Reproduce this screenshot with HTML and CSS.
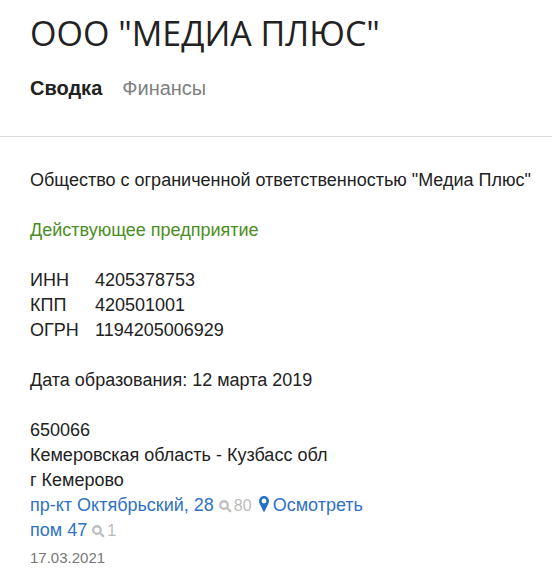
FILE: index.html
```html
<!DOCTYPE html>
<html lang="ru">
<head>
<meta charset="utf-8">
<title>ООО "МЕДИА ПЛЮС"</title>
<link rel="stylesheet" href="styles.css">
</head>
<body>
<header class="header">
  <h1 class="title">ООО "МЕДИА ПЛЮС"</h1>
  <nav class="tabs">
    <a class="tab tab-active" href="#summary" aria-current="page">Сводка</a>
    <a class="tab" href="#finance">Финансы</a>
  </nav>
</header>
<main class="summary" id="summary">
  <p>Общество с ограниченной ответственностью "Медиа Плюс"</p>
  <p class="status">Действующее предприятие</p>
  <dl class="codes">
    <dt>ИНН</dt><dd>4205378753</dd>
    <dt>КПП</dt><dd>420501001</dd>
    <dt>ОГРН</dt><dd>1194205006929</dd>
  </dl>
  <p>Дата образования: 12 марта 2019</p>
  <address class="address">
    <div>650066</div>
    <div>Кемеровская область - Кузбасс обл</div>
    <div>г Кемерово</div>
    <div class="line">
      <a href="#street">пр-кт Октябрьский, 28</a>
      <a class="count" href="#street-search"><svg class="lens" viewBox="0 0 13 13" aria-hidden="true"><circle cx="5" cy="5" r="3.800"/><path d="M8 8l3.200 3.200"/></svg>80</a>
      <a class="view" href="#map"><svg class="pin" viewBox="0 0 10 16" aria-hidden="true"><path fill-rule="evenodd" d="M5 0a5 5 0 0 0-5 5c0 1.500.600 2.800 1.300 4L4.300 15.200q.700 1 1.400 0L8.700 9c.700-1.200 1.300-2.500 1.300-4a5 5 0 0 0-5-5zm0 2.600a2.400 2.400 0 1 1 0 4.800a2.400 2.400 0 0 1 0-4.800z"/></svg>Осмотреть</a>
    </div>
    <div class="line">
      <a href="#room">пом 47</a>
      <a class="count" href="#room-search"><svg class="lens" viewBox="0 0 13 13" aria-hidden="true"><circle cx="5" cy="5" r="3.800"/><path d="M8 8l3.200 3.200"/></svg>1</a>
    </div>
    <time class="date" datetime="2021-03-17">17.03.2021</time>
  </address>
</main>
</body>
</html>
```
FILE: styles.css
```css
body {
  margin: 0;
  background: #fff;
  color: #222;
  font: 18px/25px "Liberation Sans", Arial, sans-serif;
}
a { color: #3072c4; text-decoration: none; }
.header {
  padding: 8px 20px 35px 30px;
  border-bottom: 1px solid #d9d9d9;
}
.title {
  margin: 0 0 18px;
  font: 400 34px/50px "Open Sans", "Noto Sans", sans-serif;
}
.tabs { display: flex; gap: 20px; font-size: 20px; }
.tab { color: #808080; }
.tab-active { color: #222; font-weight: 700; }
.summary { padding: 31px 20px 0 30px; }
.summary p { margin: 0 0 25px; }
.summary .status { color: #4a8f22; }
.codes {
  display: grid;
  grid-template-columns: 65px 1fr;
  margin: 0 0 25px;
}
.codes dd { margin: 0; }
.address { font-style: normal; }
.line { display: flex; align-items: center; gap: 5px; }
.count {
  display: flex;
  align-items: center;
  gap: 2px;
  color: #bbb;
  font-size: 16px;
}
.lens {
  width: 13px;
  height: 13px;
  margin-top: 2px;
  fill: none;
  stroke: #c0c0c0;
  stroke-width: 2.4;
  stroke-linecap: round;
}
.view { display: flex; align-items: center; gap: 4px; margin-left: 2px; }
.pin { width: 10px; height: 16px; margin-bottom: 3px; fill: #2271c8; }
.date { display: block; color: #777; font-size: 15px; line-height: 30px; }
```
